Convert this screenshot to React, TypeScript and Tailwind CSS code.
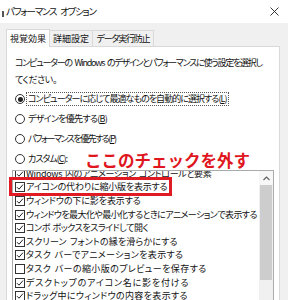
import React from 'react';

const ui = { fontFamily: '"Noto Sans CJK JP", "Noto Sans", sans-serif', fontFeatureSettings: '"palt"' };

// tracking per row, tuned so each label ends where the dialog's narrow UI font ends it
const items = [
  { label: 'Windows 内のアニメーション コントロールと要素', on: true, tr: 'tracking-[-0.3px]' },
  { label: 'アイコンの代わりに縮小版を表示する', on: true, tr: 'tracking-[-0.2px]' },
  { label: 'ウィンドウの下に影を表示する', on: true, tr: 'tracking-[-0.1px]' },
  { label: 'ウィンドウを最大化や最小化するときにアニメーションで表示する', on: true, tr: 'tracking-[-0.58px]' },
  { label: 'コンボ ボックスをスライドして開く', on: true, tr: 'tracking-[-0.45px]' },
  { label: 'スクリーン フォントの縁を滑らかにする', on: true, tr: 'tracking-[0.15px]' },
  { label: 'タスク バーでアニメーションを表示する', on: true, tr: 'tracking-[0.35px]' },
  { label: 'タスク バーの縮小版のプレビューを保存する', on: false, tr: 'tracking-[0.4px]' },
  { label: 'デスクトップのアイコン名に影を付ける', on: true, tr: 'tracking-[0.8px]' },
  { label: 'ドラッグ中にウィンドウの内容を表示する', on: true, tr: 'tracking-[0.35px]' },
];

function Radio({ on, children, focus, className }: { on?: boolean; children: React.ReactNode; focus?: boolean; className?: string }) {
  return (
    <div className="flex items-center h-[20px]">
      <span className="w-[10px] h-[10px] rounded-full border border-[#333] bg-white flex items-center justify-center shrink-0">
        {on && <span className="w-[5px] h-[5px] rounded-full bg-[#222]" />}
      </span>
      <span
        className={
          'ml-[1px] px-[1px] leading-[12px] whitespace-nowrap ' +
          (focus ? 'border border-dotted border-[#555] ' : 'border border-transparent ') +
          (className ?? '')
        }
      >
        {children}
      </span>
    </div>
  );
}

function Check({ on }: { on: boolean }) {
  return (
    <span className="w-[10px] h-[10px] border border-[#333] bg-white flex items-center justify-center shrink-0">
      {on && (
        <svg width="8" height="8" viewBox="0 0 8 8">
          <path d="M1 4.2 L3 6.2 L7 1.6" fill="none" stroke="#222" strokeWidth="1" />
        </svg>
      )}
    </span>
  );
}

export default function App() {
  return (
    <div className="relative w-[288px] h-[300px] overflow-hidden bg-[#f0f0f0] text-[9px] text-[#111]" style={ui}>
      {/* title bar */}
      <div className="h-[23px] bg-white flex items-center">
        <span className="w-[2px] h-[6px] bg-[#555] ml-[2px] mt-[4px]" />
        <span className="ml-[2px] text-[9.5px] tracking-[-1.25px] [word-spacing:3px]">パフォーマンス オプション</span>
        <svg className="ml-auto mr-[9px]" width="9" height="9" viewBox="0 0 9 9">
          <path d="M0.5 0.5 L8.5 8.5 M8.5 0.5 L0.5 8.5" stroke="#222" strokeWidth="0.9" />
        </svg>
      </div>

      {/* tabs */}
      <div className="flex items-end h-[23px] pl-[6px] pt-[5px]">
        <div className="w-[44px] h-[18px] bg-white border border-b-0 border-[#d9d9d9] flex items-center justify-center relative z-10 -mb-px">
          視覚効果
        </div>
        <div className="w-[43px] h-[16px] border border-b-0 border-l-0 border-[#d9d9d9] flex items-center justify-center">
          詳細設定
        </div>
        <div className="w-[61px] h-[16px] border border-b-0 border-l-0 border-[#d9d9d9] flex items-center justify-center tracking-[-1.2px]">
          データ実行防止
        </div>
      </div>

      {/* panel */}
      <div className="ml-[6px] w-[274px] h-[260px] bg-white border border-[#d9d9d9]">
        <p className="pl-[8px] pt-[8px] leading-[16.5px] whitespace-nowrap">
          <span className="tracking-[-1.25px] [word-spacing:2px]">
            コンピューターの Windows のデザインとパフォーマンスに使う設定を選択し
          </span>
          <br />
          <span className="tracking-[-0.4px]">てください。</span>
        </p>
        <div className="pl-[8px] mt-[1px]">
          <Radio on focus className="tracking-[-0.95px]">
            コンピューターに応じて最適なものを自動的に選択する(<span className="underline">L</span>)
          </Radio>
          <Radio className="tracking-[-0.7px]">
            デザインを優先する(<span className="underline">B</span>)
          </Radio>
          <Radio className="tracking-[-1.5px]">
            パフォーマンスを優先する(<span className="underline">P</span>)
          </Radio>
          <div className="flex items-center">
            <Radio className="tracking-[-1px]">
              カスタム(<span className="underline">C</span>):
            </Radio>
            <span
              className="ml-[16px] text-[16.5px] font-bold text-[#e0161e] leading-[18px] mt-[1px]"
              style={{ fontFeatureSettings: 'normal' }}
            >
              ここのチェックを外す
            </span>
          </div>
        </div>

        {/* list box */}
        <div className="ml-[5px] mt-[1px] w-[262px] h-[140px] border border-[#ababab] flex overflow-hidden">
          <div className="flex-1 overflow-hidden">
            <div className="mt-[-4px] pl-[2px]">
              {items.map((it) => (
                <div key={it.label} className="h-[13.6px] flex items-center">
                  <Check on={it.on} />
                  <span className={'ml-[1px] whitespace-nowrap leading-[12px] [word-spacing:1px] ' + it.tr}>{it.label}</span>
                </div>
              ))}
            </div>
          </div>
          <div className="w-[14px] bg-[#f0f0f0] flex flex-col">
            <div className="h-[14px] bg-[#f7f7f7] flex items-center justify-center">
              <svg width="7" height="5" viewBox="0 0 7 5">
                <path d="M0.5 4 L3.5 1 L6.5 4" fill="none" stroke="#606060" strokeWidth="1.1" />
              </svg>
            </div>
            <div className="mx-[1px] h-[95px] bg-[#cdcdcd]" />
          </div>
        </div>
      </div>

      {/* annotation box */}
      <div className="absolute left-[9px] top-[177px] w-[163px] h-[19px] border-[3px] border-[#e01b24]" />
    </div>
  );
}
